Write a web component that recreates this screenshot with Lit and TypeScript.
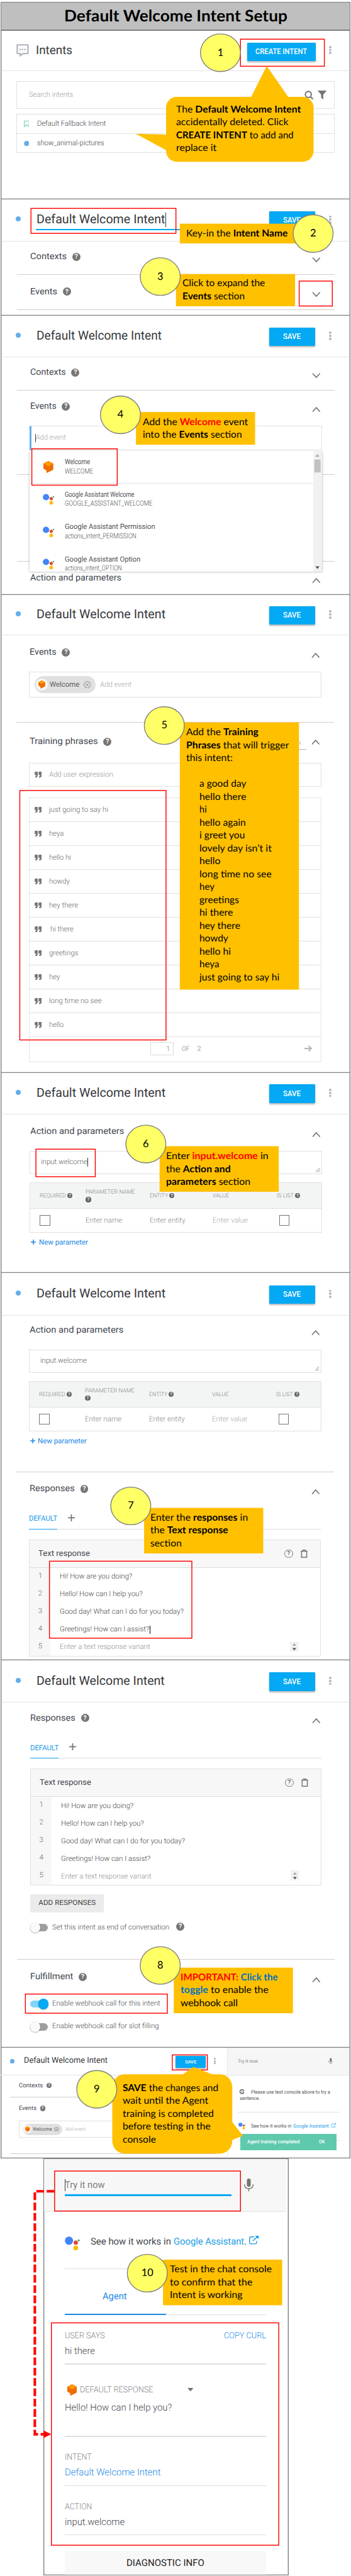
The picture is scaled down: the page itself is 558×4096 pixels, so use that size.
import { LitElement, html, svg, css, nothing } from 'lit';
import { customElement } from 'lit/decorators.js';
import { styleMap } from 'lit/directives/style-map.js';
import { classMap } from 'lit/directives/class-map.js';

type Part = string | [string, string];

/* Text set to an exact measure; the width is applied once the fonts are laid out. */
const t = (text: string, w: number, cls = '') =>
  html`<span class="fit ${cls}" data-w=${w}>${text}</span>`;

const mt = (n: number) => styleMap({ marginTop: n + 'px' });

const help = (cls = '') => html`<span class="help ${cls}">?</span>`;

const chevron = (up: boolean, drop: number) => html`<svg class="chev" style=${mt(drop)} viewBox="0 0 20 12">
  <path d=${up ? 'M1.5 11 10 1.6 18.5 11' : 'M1.5 1 10 10.4 18.5 1'} fill="none" stroke="#757575" stroke-width="2.4"/></svg>`;

const kebab = html`<span class="kebab"><i></i><i></i><i></i></span>`;

const flow = html`<svg class="flowicon" viewBox="0 0 23 28">
  <path d="M11.5 0 23 6v14l-9 5-7 3v-6l-7-4V6z" fill="#ef6c00"/>
  <path d="M11.5 0 22.5 6 11.5 12.5.5 6z" fill="#ff9800"/></svg>`;

const assistant = html`<svg class="asst" viewBox="0 0 35 33">
  <circle cx="9.8" cy="10" r="9.6" fill="#4285f4"/><circle cx="25.5" cy="14.5" r="5" fill="#ea4335"/>
  <circle cx="25.5" cy="27" r="5.6" fill="#fbbc05"/><circle cx="32.4" cy="9.2" r="2.3" fill="#34a853"/></svg>`;

const external = html`<svg class="ext" viewBox="0 0 22 20">
  <path d="M12 2.5H3.500Q1.200 2.500 1.200 4.800V16.500Q1.200 18.800 3.500 18.800H15Q17.300 18.800 17.300 16.500V12M8.500 12 19.500 2" fill="none" stroke="#1a9be8" stroke-width="2"/>
  <path d="M14 0h8v8z" fill="#1a9be8"/></svg>`;

const mic = html`<svg class="mic" viewBox="0 0 22 30">
  <rect x="6.500" y="0" width="9" height="19" rx="4.500" fill="#757575"/>
  <path d="M1 13.500C1 20 5 23.500 11 23.500S21 20 21 13.500M11 23.500V30" fill="none" stroke="#757575" stroke-width="2"/></svg>`;

const quote = html`<svg class="quote" viewBox="0 0 16 14">
  <path d="M1.500 0H7V8.500Q7 14 1 14V11.200Q3.600 11 3.600 8H1.500Q0 8 0 6.500V1.500Q0 0 1.500 0zM10.500 0H16V8.500Q16 14 10 14V11.200Q12.600 11 12.600 8H10.500Q9 8 9 6.500V1.500Q9 0 10.500 0z" fill="#757575"/></svg>`;

const plus = html`<svg class="plus" viewBox="0 0 16 16"><path d="M8 0V16M0 8H16" stroke="#757575" stroke-width="2.600"/></svg>`;

const rule = (m: number) => html`<div class="rule" style=${mt(m)}></div>`;

const bar = (o: { h: number; w: number; editing?: boolean }) => html`
  <header class="bar" style=${styleMap({ height: o.h + 'px' })}>
    <span class="dot"></span>
    <h2 class=${classMap({ title: true, editing: !!o.editing })}>${t('Default Welcome Intent', o.w)}${o.editing ? html`<i class="caret tall"></i>` : nothing}</h2>
    <button class="save">${t('SAVE', 41)}</button>${kebab}
  </header>`;

const head = (label: string, w: number, m: number, o: { up?: boolean; help?: boolean; drop?: number; bare?: boolean } = {}) => html`
  <div class="head" style=${mt(m)}>${t(label, w)}${o.help === false ? nothing : help()}<span class="grow"></span>
    ${o.bare ? nothing : chevron(!!o.up, o.drop ?? 13)}</div>`;

const chip = html`<span class="chip"><span class="coin">${flow}</span>${t('Welcome', 69)}
  <svg class="clear" viewBox="0 0 18 18"><path d="M5.500 5.500 12.500 12.500M12.500 5.500 5.500 12.500" stroke="#757575" stroke-width="1.300"/><circle cx="9" cy="9" r="8" fill="none" stroke="#757575" stroke-width="1.300"/></svg></span>`;

const grip = html`<svg class="grip" viewBox="0 0 10 10"><path d="M0 10 9 0M5 10 10 4.500" stroke="#666" stroke-width="1.200"/></svg>`;

const params = (caret: boolean, drop: number) => html`
  ${head('Action and parameters', 218.5, drop, { up: true, help: false })}
  <div class="field area">${t('input.welcome', 108)}${caret ? html`<i class="caret"></i>` : nothing}${grip}</div>
  <div class="table">
    <div class="tr th">
      <span>${t('REQUIRED', 61)}${help('xs')}</span>
      <span class="two">${t('PARAMETER NAME', 115)}${help('xs')}</span>
      <span>${t('ENTITY', 43)}${help('xs')}</span>
      <span>${t('VALUE', 38.5)}</span>
      <span>${t('IS LIST', 39.5)}${help('xs')}</span>
    </div>
    <div class="tr td">
      <span><i class="check"></i></span><span>${t('Enter name', 85)}</span><span>${t('Enter entity', 83)}</span>
      <span class="pale">${t('Enter value', 82)}</span><span><i class="check last"></i></span>
    </div>
  </div>
  <a class="newparam"><svg class="plusblue" viewBox="0 0 12 12"><path d="M6 0V12M0 6H12" stroke="#1e88e5" stroke-width="2.200"/></svg>${t('New parameter', 114)}</a>`;

const answers: [string, number][] = [
  ['Hi! How are you doing?', 168.6],
  ['Hello! How can I help you?', 192.5],
  ['Good day! What can I do for you today?', 288],
  ['Greetings! How can I assist?', 208],
  ['Enter a text response variant', 210],
];

const responses = (m: number, editing: boolean) => html`
  ${head('Responses', 105, m, { up: true })}
  <div class="tabs"><span class="tab">${t('DEFAULT', 66)}</span>${plus}</div>
  <div class="card">
    <div class="cardhead">${t('Text response', 120)}<span class="grow"></span><span class="ring">?</span>
      <svg class="trash" viewBox="0 0 16 19"><path d="M2 4.500V17.800H14V4.500M0 3.700H16M5.200 3.500V1.100H10.800V3.500" fill="none" stroke="#757575" stroke-width="2.200"/></svg></div>
    ${answers.map(([s, w], i) => html`
      <div class="answer"><span class="num">${i + 1}</span>
        <span class=${classMap({ said: true, hint: i === 4 })}>${t(s, w)}${editing && i === 3 ? html`<i class="caret dark"></i>` : nothing}</span>
        ${i === 4 ? html`<svg class="spin" viewBox="0 0 20 24"><rect width="20" height="24" fill="#f1f1f1"/><path d="M5.500 10 10 4.500 14.500 10z" fill="#a3a3a3"/><path d="M5.500 15.500 10 21 14.500 15.500z" fill="#505050"/></svg>` : nothing}
      </div>`)}
  </div>`;

const toggle = (label: string, w: number, m: number, on = false, q = false) => html`
  <div class="toggle" style=${mt(m)}><span class=${classMap({ track: true, on })}></span>${t(label, w)}${q ? help('far') : nothing}</div>`;

const events: [string, number, string, number][] = [
  ['Welcome', 67, 'WELCOME', 66],
  ['Google Assistant Welcome', 196, 'GOOGLE_ASSISTANT_WELCOME', 204],
  ['Google Assistant Permission', 210, 'actions_intent_PERMISSION', 173],
  ['Google Assistant Option', 176, 'actions_intent_OPTION', 141.5],
];

const phrases: [string, number][] = [
  ['just going to say hi', 137.4], ['heya', 34], ['hello hi', 51], ['howdy', 48], ['hey there', 67.6],
  ['hi there', 54], ['greetings', 68], ['hey', 25.5], ['long time no see', 122], ['hello', 34],
];

/* Notes: left edge, centre of the first line, then the lines with their measures. */
const notes: { x: number; y: number; lines: [Part[], number, number?][] }[] = [
  { x: 409, y: 255, lines: [
    [['The ', ['b', 'Default Welcome Intent']], 290], [['accidentally deleted. Click'], 261],
    [[['b', 'CREATE INTENT'], ' to add and'], 273], [['replace it'], 94]] },
  { x: 433.5, y: 543.5, lines: [[['Key-in the ', ['b', 'Intent Name']], 236]] },
  { x: 424.5, y: 659, lines: [[['Click to expand the'], 192], [[['b', 'Events'], ' section'], 145]] },
  { x: 331.5, y: 981.5, lines: [[['Add the ', ['r', 'Welcome'], ' event'], 244.5], [['into the ', ['b', 'Events'], ' section'], 230.5]] },
  { x: 433.5, y: 1703, lines: [
    [['Add the ', ['b', 'Training']], 168], [[['b', 'Phrases'], ' that will trigger'], 239], [['this intent:'], 108], [[''], 0],
    ...([['a good day', 109], ['hello there', 109], ['hi', 17], ['hello again', 108], ['i greet you', 106],
      ['lovely day isn’t it', 168], ['hello', 49], ['long time no see', 168], ['hey', 35], ['greetings', 92],
      ['hi there', 78], ['hey there', 95], ['howdy', 67], ['hello hi', 73], ['heya', 46],
      ['just going to say hi', 186]] as [string, number][]).map(([s, w]) => [[s], w, 29.5] as [Part[], number, number])] },
  { x: 386, y: 2689, lines: [[['Enter ', ['r', 'input.welcome'], ' in'], 238], [['the ', ['b', 'Action and']], 150], [[['b', 'parameters'], ' section'], 196]] },
  { x: 350, y: 3529, lines: [[['Enter the ', ['b', 'responses'], ' in'], 227], [['the ', ['b', 'Text response']], 181], [['section'], 73]] },
  { x: 420, y: 4598, lines: [[[['r', 'IMPORTANT:'], ' ', ['u', 'Click the']], 226], [[['u', 'toggle'], ' to enable the'], 204.5], [['webhook call'], 133]] },
  { x: 285.5, y: 4855, lines: [[[['b', 'SAVE'], ' the changes and'], 222.5], [['wait until the Agent'], 199],
    [['training is completed'], 212], [['before testing in the'], 204.5], [['console'], 77.5]] },
  { x: 394.5, y: 5277, lines: [[['Test in the chat console'], 237], [['to confirm that the'], 192], [['Intent is working'], 169]] },
];

const noteBoxes = [
  [418, 520, 290, 46], [409, 637, 277, 75], [316, 958, 277, 76], [418, 1679.5, 277, 621.5], [371, 2665, 277, 106],
  [335, 3506, 277, 106], [404, 4575, 277, 106], [379, 5254, 277, 106],
];
const redBoxes = [
  [559, 91, 195, 63], [72, 484.5, 337, 58], [695.5, 653.5, 77, 58], [74, 1043.5, 198.500, 84.500], [46, 1838, 340, 580],
  [83.500, 2672, 138, 64], [115, 3630, 331, 179], [59, 4636.500, 330, 44.500], [400.500, 4778, 81.500, 35],
  [127, 5048, 432, 93], [119.500, 5401, 528.500, 517],
];
const steps = [
  [512.5, 122.5, 123.5], [728, 543, 543.5], [372.500, 643, 644], [280, 964.5, 965], [382, 1687, 1687], [339, 2660, 2661],
  [304, 3501.5, 3502], [372.500, 4570, 4571], [225, 4858, 4859], [342.5, 5285.500, 5286],
];

@customElement('app-root')
export class AppRoot extends LitElement {
  static styles = css`
    :host { display: block; width: 558px; height: 4096px; overflow: hidden; background: #fff; }
    * { box-sizing: border-box; }
    h1, h2 { margin: 0; font: inherit; }
    button { border: 0; padding: 0; font: inherit; color: inherit; }
    .sheet { zoom: 0.68386; position: relative; width: 816px; height: 5989px; padding-top: 4px; overflow: hidden;
      font: 300 17px Roboto, sans-serif; color: #5f6368; text-rendering: geometricPrecision; }
    .fit { display: inline-block; white-space: pre; transform-origin: 0 50%; flex: none; line-height: 1.2; }
    .grow { flex: 1; }
    .banner { height: 66px; margin: 0 1px 0 2px; background: #bfbfbf; outline: 2px solid #7f7f7f; outline-offset: -2px;
      display: flex; align-items: center; justify-content: center; font: 700 37px Lato, sans-serif; color: #000; }
    .panel { display: flex; flex-direction: column; position: relative; margin: 0 1px;
      box-shadow: inset 2px 0 #7f7f7f, inset -2px 0 #7f7f7f, inset 0 -2px #7f7f7f; padding: 0 1px; }
    .p1 { height: 393px; box-shadow: inset 2px 0 #7f7f7f, inset -2px 0 #7f7f7f, inset 0 -2px #7f7f7f, inset 0 1.5px #7f7f7f; }
    .p2 { height: 271px; } .p3 { height: 649px; } .p4 { height: 1111px; }
    .p5 { height: 466px; } .p6 { height: 901px; } .p7 { height: 900px; }
    .p6 .body, .p4 .body { margin-left: -1.500px; margin-right: 1.500px; }
    .body { display: flex; flex-direction: column; }

    .bar { display: flex; align-items: center; flex: none; margin: 0 1px; padding: 0 43px 0 33px; border-bottom: 1.500px solid #e3e4e5; }
    .dot { width: 12px; height: 12px; border-radius: 50%; background: #64aee9; margin-top: -4px; }
    .title { flex: 1; margin-left: 37px; font-size: 29px; font-weight: 400; color: #37393c; position: relative; line-height: 36px; }
    .editing::after { content: ''; position: absolute; left: -1px; top: 39px; width: 500px; height: 3px; background: #03a9f4; }
    .caret { display: inline-block; width: 1.500px; height: 20px; background: #333; vertical-align: middle; }
    .caret.tall { height: 34px; vertical-align: -8px; }
    .save { width: 106px; height: 43px; margin: 3px 32px 0 0; border-radius: 2px; background: #03a9f4; color: #fff; flex: none;
      font-size: 17.500px; font-weight: 500; box-shadow: 0 2px 4px rgba(0,0,0,.3); display: grid; place-items: center; }
    .kebab { display: flex; flex-direction: column; gap: 1.500px; width: 6px; margin-top: -1px; }
    .kebab i { width: 6px; height: 5.500px; border-radius: 50%; background: #b4b8c2; }
    .p1bar { padding-left: 35.500px; height: 95px; }
    .p1bar .title { margin-left: 16px; font-size: 28px; }
    .p1bar .save { width: 160px; margin-top: 7px; margin-right: 30px; }
    .chat { width: 29px; height: 29px; }

    .search, .list { margin: 24px 36.500px 0; border: 1.500px solid #e0e0e0; }
    .search { height: 64px; display: flex; align-items: center; padding: 0 16px 0 28px; gap: 11px; color: #9b9ea3; }
    .search svg { width: 21px; height: 21px; }
    .list { margin-top: 12px; }
    .item { height: 44px; display: flex; align-items: center; padding-left: 15px; gap: 18px; color: #43474f; }
    .item + .item { border-top: 1.500px solid #e0e0e0; }
    .item svg { width: 13px; height: 15px; }

    .head { display: flex; align-items: center; flex: none; height: 40px; padding: 0 69px 0 68px; font-size: 20.500px; font-weight: 400; color: #43474f; }
    .help { display: grid; place-items: center; flex: none; width: 19px; height: 19px; margin-left: 13px; border-radius: 50%;
      background: #757575; color: #fff; font: 700 15px/1 Roboto, sans-serif; }
    .help.xs { width: 12px; height: 12px; font-size: 9.500px; margin-left: 3px; background: #666; }
    .help.far { margin: -4px 0 0 16px; }
    .chev { width: 20px; height: 12px; flex: none; }
    .rule { height: 1.500px; flex: none; margin: 0 36px 0 37px; background: #d3cdcf; }

    .field { display: flex; align-items: center; flex: none; position: relative; margin: 24px 66px 0 67px; border: 1.500px solid #e0e0e0; }
    .blank { height: 58px; border-left: 5px solid #64aee9; padding-left: 8px; color: #a6a9ad; }
    .chips { height: 60px; margin-top: 25px; padding-left: 12px; color: #a6a9ad; }
    .chip { display: flex; align-items: center; height: 39px; padding: 0 11px 0 3px; margin-right: 10px; border-radius: 20px; background: #e0e0e0; color: #5c5c5c; font-weight: 400; gap: 5px; width: 141px; }
    .coin { width: 27px; height: 27px; border-radius: 50%; background: #f7f7f7; display: grid; place-items: center; }
    .coin .flowicon { width: 16px; height: 19px; }
    .clear { width: 17px; height: 17px; margin-left: 4px; }
    .area { height: 54.500px; padding-left: 25px; margin-top: 24.500px; }
    .grip { position: absolute; right: 3px; bottom: 3px; width: 10px; height: 10px; }

    .menu { position: absolute; left: 68px; top: 315px; width: 679px; height: 281px; background: #fff; display: flex; overflow: hidden; }
    .menushade { position: absolute; left: 68px; top: 316px; width: 679px; height: 280px; box-shadow: 0 2px 5px rgba(0,0,0,.35); }
    .options { flex: 1; }
    .option { height: 75px; display: flex; align-items: center; color: #4c4f54; }
    .option:first-child { border-bottom: 1.500px solid #e0e0e0; }
    .option .pic { width: 82px; padding-left: 30px; display: flex; }
    .option .pair { display: grid; grid-auto-rows: 21px; align-items: center; }
    .pair .fit:first-child { font-weight: 400; }
    .option .flowicon { width: 23px; height: 28px; margin-left: 2px; }
    .option .asst { width: 27px; height: 26px; }
    .scroll { width: 19.500px; background: #f1f1f1; }

    .quote { width: 16.500px; height: 14px; margin-right: 17px; flex: none; }
    .add { height: 56px; margin-top: 29px; padding-left: 11px; color: #94979b; }
    .said-list { margin: 25px 66px 0 67px; border: 1.500px solid #e3e4e5; }
    .phrase { height: 55.600px; display: flex; align-items: center; padding-left: 11px; border-bottom: 1.500px solid #e0e0e0; color: #6a6a6a; }
    .phrase .in { margin-left: 4px; }
    .pager { height: 56.500px; display: flex; align-items: center; padding: 0 20px 3px 280px; color: #a0a5ab; font-size: 16px; font-weight: 400; }
    .page { width: 55px; height: 30px; border: 1.500px solid #dcdcdc; text-align: right; padding: 5px 7px 0 0; line-height: 18px; margin-right: 19px; }
    .pager .of { margin-right: 18px; }
    .pager svg { width: 18px; height: 15px; }

    .table { margin: 19.500px 66px 0 67px; height: 117px; flex: none; border: 1.500px solid #e0e0e0; }
    .tr { display: grid; grid-template-columns: 107px 148px 147px 149px 1fr; align-items: center; padding-left: 22px; }
    .tr > span { display: flex; align-items: center; }
    .th { height: 60px; background: #f3f5f5; border-bottom: 1.500px solid #e0e0e0; color: #7e8186; font-size: 13.500px; }
    .tr > .two { flex-direction: column; align-items: flex-start; gap: 3px; margin-top: -1px; }
    .two .help.xs { margin-left: 0; }
    .td { height: 54px; color: #85888c; }
    .pale { color: #a9acb1; }
    .check { width: 24px; height: 24px; border: 1.500px solid #757575; } .check.last { margin-left: 6px; }
    .newparam { display: flex; align-items: center; flex: none; height: 24px; margin: 11px 0 0 69px; gap: 7px; color: #1e88e5; font-weight: 400; }
    .plusblue { width: 12px; height: 12px; margin-top: -3px; }

    .tabs { display: flex; flex: none; height: 48px; margin: 26px 67px 0 67px; border-bottom: 1.500px solid #dcdcdc; }
    .tab { height: 48px; padding-top: 12px; border-bottom: 2px solid #1a9be8; color: #1a9be8; font-weight: 400; }
    .plus { width: 16px; height: 16px; margin: 13px 0 0 25px; }
    .card { margin: 24px 67px 0 67px; flex: none; border: 1.500px solid #e0e0e0; }
    .cardhead { height: 64px; display: flex; align-items: center; padding: 0 29px 0 20px; background: #f7f7f7; border-bottom: 1.500px solid #dcdcdc; font-size: 18.500px; font-weight: 400; color: #43474f; }
    .ring { width: 20px; height: 20px; border: 2px solid #757575; border-radius: 50%; display: grid; place-items: center; font: 700 14px/1 Roboto, sans-serif; color: #757575; margin-right: 18px; }
    .trash { width: 16px; height: 19px; }
    .answer { display: flex; height: 41px; align-items: center; color: #45484c; position: relative; }
    .num { width: 48px; height: 41px; padding: 7px 0 0 20px; background: #f7f7f7; color: #6b6e73; }
    .said { padding-left: 22.500px; } .hint { color: #8f9296; }
    .caret.dark { background: #000; }
    .spin { position: absolute; right: 50px; top: 7px; width: 20px; height: 24px; }
    .p7 .body .tabs { margin-left: 68px; } .p7 .card { margin-left: 68px; margin-top: 23.500px; }
    .addresp { width: 171px; height: 43px; flex: none; margin: 20px 0 0 68px; background: #ebebeb; border-radius: 2px; color: #3d4045; font-weight: 400; padding-bottom: 2px; }
    .toggle { display: flex; flex: none; align-items: center; height: 30px; padding-left: 68px; color: #4d5056; }
    .track { width: 41px; height: 17px; margin-right: 11px; border-radius: 9px; background: #9e9e9e; position: relative; margin-top: 2px; }
    .track::before { content: ''; position: absolute; left: 0; top: -3.500px; width: 24px; height: 24px; border-radius: 50%; background: #fafafa; box-shadow: 0 1px 3px rgba(0,0,0,.4); }
    .track.on { background: #81d4fa; } .track.on::before { left: 19px; background: #03a9f4; }

    .p8 { height: 257px; margin: 0 2px 0 1px; flex-direction: row; }
    .left { width: 527px; border-right: 1.500px solid #e8e8e8; height: 254px; }
    .right { flex: 1; height: 254px; position: relative; font-size: 11.500px; font-weight: 400; color: #4f5359; }
    .left .bar { margin: 0; padding: 0 26px 0 22px; }
    .left .dot { width: 9px; height: 9px; margin-top: 0; }
    .left .title { margin-left: 22px; font-size: 19px; }
    .left .save { width: 70px; height: 28px; margin: 4px 20px 0 0; font-size: 11.500px; }
    .left .kebab i { width: 4px; height: 4px; } .left .kebab { gap: 1px; width: 4px; }
    .left .head { font-size: 14px; padding-left: 42px; }
    .left .help { width: 12px; height: 12px; font-size: 9.500px; margin-left: 8px; }
    .left .rule { margin-left: 22px; margin-right: 24px; }
    .left .chips { height: 39px; margin: 9px 20px 0 42px; padding-left: 8px; font-size: 11.500px; }
    .left .chip { width: 91px; height: 26px; padding: 0 7px 0 2px; gap: 3px; margin-right: 7px; }
    .left .coin { width: 18px; height: 18px; } .left .coin .flowicon { width: 11px; height: 13px; }
    .left .clear { width: 11px; height: 11px; margin-left: 2px; }
    .try { height: 65px; background: #f6f6f6; border-bottom: 1.500px solid #e3e4e5; display: flex; align-items: center; padding: 0 38px 0 24px; color: #85888c; margin-right: 1px; }
    .try .mic { width: 11px; height: 16px; }
    .info { margin: 30px 0 0 28px; line-height: 16px; height: 32px; }
    .info div { display: flex; height: 16px; align-items: center; }
    .info svg { width: 11px; height: 11px; margin-right: 16px; }
    .right .rule { margin-left: 24px; margin-right: 23px; background: #e0e0e0; }
    .see { display: flex; align-items: center; height: 20px; margin: 21px 0 0 25px; flex: none; }
    .see .asst { width: 17px; height: 16px; margin-right: 13px; }
    .see .link { color: #1a9be8; margin-left: 3px; }
    .see .ext { width: 11px; height: 10px; margin: -3px 0 0 4px; }
    .toast { position: absolute; left: 30px; top: 200px; width: 224px; height: 39px; background: #5fc9ae; color: #fff; font-weight: 500; display: flex; align-items: center; padding: 0 28px 0 15px; justify-content: space-between; }

    .p9 { height: 970px; width: 570px; margin: 0 0 0 101px; padding: 2px; box-shadow: inset 0 0 0 2px #7f7f7f; font-size: 22px; font-weight: 300; color: #43474f; }
    .console { height: 123px; background: #f7f7f7; border-bottom: 1.500px solid #e3e4e5; display: flex; align-items: center; padding: 0 77px 0 47px; flex: none; margin-right: 3px; }
    .entry { position: relative; width: 389px; height: 28px; color: #7b7e83; font-weight: 400; display: flex; align-items: center; }
    .entry::after { content: ''; position: absolute; left: 0; right: 0; top: 35px; height: 4px; background: #03a9f4; }
    .entry .caret { height: 28px; margin-right: -1px; }
    .console .mic { width: 22px; height: 30px; margin-left: 29px; }
    .p9 .see { height: 40px; margin: 49px 0 0 48px; font-weight: 400; }
    .p9 .see .asst { width: 35px; height: 33px; margin: 8px 25px 0 0; }
    .p9 .see .link { margin-left: 6px; } .p9 .see .ext { width: 22px; height: 20px; margin-left: 6px; margin-top: -6px; }
    .p9 .rule { margin-left: 47px; margin-right: 51px; background: #dfdfdf; height: 2px; }
    .agent { height: 63px; margin: 44px 51px 0 47px; border-bottom: 2px solid #dfdfdf; flex: none; }
    .agent div { width: 236px; height: 63px; border-bottom: 3px solid #1a8be0; padding: 6px 0 0 89px; color: #1e88e5; font-weight: 400; }
    .line { display: flex; align-items: center; height: 30px; flex: none; padding: 0 51px 0 48px; }
    .cap { font-size: 20px; color: #84888e; }
    .blue { color: #1e88e5; }
    .cap .flowicon { width: 22px; height: 27px; margin: 0 8px 0 5px; }
    .drop { margin-left: 79px; }
    .diag { height: 55px; flex: none; margin: 37px 51px 0 47px; background: #f8f8f8; color: #222; font-weight: 400; display: grid; place-items: center; }

    .overlay { position: absolute; left: 0; top: 0; width: 816px; height: 5989px; }
    .note { position: absolute; font: 400 22.200px/30px Lato, sans-serif; color: #000; }
    .note div { height: 30px; } .note .fit { line-height: 30px; }
    .note b { font-weight: 700; } .note .r { color: #f00; } .note .u { color: #0070c0; }
    .step { position: absolute; width: 60px; height: 30px; text-align: center; font: 400 24px/30px Lato, sans-serif; color: #000; }
  `;

  firstUpdated() {
    const sheet = this.renderRoot.querySelector('.sheet') as HTMLElement;
    const unit = sheet.getBoundingClientRect().width / 816;
    const spans = [...this.renderRoot.querySelectorAll<HTMLElement>('.fit')];
    const natural = spans.map((s) => s.getBoundingClientRect().width / unit);
    spans.forEach((s, i) => {
      const w = Number(s.dataset.w);
      if (!w || !natural[i]) return;
      s.style.width = w + 'px';
      s.style.transform = `scaleX(${w / natural[i]})`;
    });
  }

  render() {
    return html`<main class="sheet">
      <h1 class="banner">${t('Default Welcome Intent Setup', 519)}</h1>

      <section class="panel p1">
        <header class="bar p1bar">
          <svg class="chat" viewBox="0 0 29 29"><path d="M2 2H27V22H15.500L9 27.500V22H2z" fill="none" stroke="#b4b8c2" stroke-width="3.400" stroke-linejoin="round"/><path d="M7 11h3.500v3.500H7zM12.700 11h3.500v3.500h-3.500zM18.400 11h3.500v3.500h-3.500z" fill="#b4b8c2"/></svg>
          <h2 class="title">${t('Intents', 85)}</h2>
          <button class="save">${t('CREATE INTENT', 120)}</button>${kebab}
        </header>
        <div class="search">${t('Search intents', 102.5)}<span class="grow"></span>
          <svg viewBox="0 0 21 21"><circle cx="9" cy="9" r="7" fill="none" stroke="#757575" stroke-width="3"/><path d="M13.500 14 20 20.500" stroke="#757575" stroke-width="3.200"/></svg>
          <svg viewBox="0 0 21 21"><path d="M0 0H21L13 9.500V21L8 16.500V9.500z" fill="#757575"/></svg>
        </div>
        <div class="list">
          <div class="item"><svg viewBox="0 0 13 15"><path d="M1 .8H12V13.800L6.500 9.500 1 13.800z" fill="none" stroke="#6ccba6" stroke-width="1.500"/></svg>${t('Default Fallback Intent', 160)}</div>
          <div class="item"><svg viewBox="0 0 13 15"><circle cx="6.500" cy="7.500" r="6" fill="#64aee9"/></svg>${t('show_animal-pictures', 156)}</div>
        </div>
      </section>

      <section class="panel p2">
        ${bar({ h: 98, w: 299, editing: true })}
        ${head('Contexts', 85, 16)}${rule(21)}
        ${head('Events', 63, 19)}${rule(21)}
      </section>

      <section class="panel p3">
        ${bar({ h: 96, w: 291 })}
        ${head('Contexts', 83, 16)}${rule(20)}
        ${head('Events', 61, 18, { up: true })}
        <div class="field blank"><i class="caret"></i>${t('Add event', 70)}</div>
        ${rule(55)}${rule(200)}
        ${head('Action and parameters', 212, 19, { up: true, help: false, drop: 12 })}
        <div class="menushade"></div>
        <div class="menu">
          <div class="options">${events.map(([a, aw, b, bw], i) => html`
            <div class="option"><span class="pic">${i ? assistant : flow}</span><span class="pair">${t(a, aw)}${t(b, bw)}</span></div>`)}
          </div>
          <svg class="scroll" viewBox="0 0 19.500 281"><path d="M5 13.500 9.700 7.500 14.400 13.500z" fill="#a3a3a3"/><rect x="2.500" y="20" width="14.500" height="30" fill="#c1c1c1"/><path d="M5 268.500 9.700 274.500 14.400 268.500z" fill="#505050"/></svg>
        </div>
      </section>

      <section class="panel p4">
        ${bar({ h: 94, w: 300 })}
        <div class="body">
          ${head('Events', 62.5, 20, { up: true })}
          <div class="field chips">${chip}${t('Add event', 73)}</div>
          ${rule(57)}
          ${head('Training phrases', 159, 24, { up: true, drop: 4 })}
          <div class="field add">${quote}${t('Add user expression', 149)}</div>
          <div class="said-list">
            ${phrases.map(([s, w], i) => html`<div class="phrase">${quote}${t(s, w, i === 5 ? 'in' : '')}</div>`)}
            <div class="pager"><span class="page">1</span><span class="of">${t('OF', 17.5)}</span>2<span class="grow"></span>
              <svg viewBox="0 0 18 15"><path d="M0 7.500H16M9.500 1 16 7.500 9.500 14" fill="none" stroke="#b4b8c2" stroke-width="3"/></svg></div>
          </div>
        </div>
      </section>

      <section class="panel p5">${bar({ h: 97, w: 300 })}${params(true, 20)}</section>

      <section class="panel p6">
        ${bar({ h: 99, w: 300 })}
        <div class="body">${params(false, 14)}${rule(58)}${responses(19, true)}</div>
      </section>

      <section class="panel p7">
        ${bar({ h: 97.5, w: 298 })}
        <div class="body">${responses(16.5, false)}
          <button class="addresp">${t('ADD RESPONSES', 133)}</button>
          ${toggle('Set this intent as end of conversation', 272, 19, false, true)}
          ${rule(59.5)}
          ${head('Fulfillment', 100, 19.5, { up: true })}
          ${toggle('Enable webhook call for this intent', 251, 27, true)}
          ${toggle('Enable webhook call for slot filling', 248, 23)}
        </div>
      </section>

      <section class="panel p8">
        <div class="left body">
          <header class="bar" style=${styleMap({ height: '65px' })}><span class="dot"></span>
            <h2 class="title">${t('Default Welcome Intent', 194.5)}</h2><button class="save">${t('SAVE', 26.5)}</button>${kebab}</header>
          ${head('Contexts', 56, 3.5, { bare: true })}${rule(6.5)}
          ${head('Events', 41, 5, { bare: true })}
          <div class="field chips"><span class="chip"><span class="coin">${flow}</span>${t('Welcome', 45)}
            <svg class="clear" viewBox="0 0 18 18"><path d="M5.500 5.500 12.500 12.500M12.500 5.500 5.500 12.500" stroke="#757575" stroke-width="1.800"/><circle cx="9" cy="9" r="8" fill="none" stroke="#757575" stroke-width="1.800"/></svg></span>${t('Add event', 47)}</div>
          ${rule(36)}
        </div>
        <div class="right body">
          <div class="try">${t('Try it now', 47)}<span class="grow"></span>${mic}</div>
          <div class="info">
            <div><svg viewBox="0 0 11 11"><circle cx="5.500" cy="5.500" r="4.700" fill="none" stroke="#333" stroke-width="1.500"/><path d="M5.500 2.500V4M5.500 4.800V8.500" stroke="#333" stroke-width="1.400"/></svg>${t('Please use test console above to try a', 184)}</div>
            <div>${t('sentence.', 47)}</div>
          </div>
          ${rule(23)}
          <div class="see">${assistant}${t('See how it works in', 94)}<span class="link">${t('Google Assistant.', 85.5)}</span>${external}</div>
          ${rule(23)}
          <div class="toast">${t('Agent training completed', 122)}${t('OK', 14)}</div>
        </div>
      </section>

      <section class="panel p9">
        <div class="console"><div class="entry"><i class="caret"></i>${t('Try it now', 93)}</div>${mic}</div>
        <div class="see">${assistant}${t('See how it works in', 187)}<span class="link">${t('Google Assistant', 164)}</span>.${external}</div>
        ${rule(42)}
        <div class="agent"><div>${t('Agent', 56.5)}</div></div>
        <div class="line cap" style=${mt(33)}>${t('USER SAYS', 93)}<span class="grow"></span><span class="blue">${t('COPY CURL', 98)}</span></div>
        <div class="line" style=${mt(5)}>${t('hi there', 70)}</div>
        ${rule(15)}
        <div class="line cap" style=${mt(44)}>${flow}${t('DEFAULT RESPONSE', 170.5)}
          <svg width="14" height="8" viewBox="0 0 14 8" class="drop"><path d="M0 0H14L7 8z" fill="#757575"/></svg></div>
        <div class="line" style=${mt(11)}>${t('Hello! How can I help you?', 249)}</div>
        ${rule(51)}
        <div class="line cap" style=${mt(33)}>${t('INTENT', 62.5)}</div>
        <div class="line blue" style=${mt(5)}>${t('Default Welcome Intent', 223)}</div>
        ${rule(15)}
        <div class="line cap" style=${mt(33)}>${t('ACTION', 63.5)}</div>
        <div class="line" style=${mt(5)}>${t('input.welcome', 139)}</div>
        ${rule(14)}
        <div class="diag">${t('DIAGNOSTIC INFO', 181)}</div>
      </section>

      <svg class="overlay" viewBox="0 0 816 5989">
        <path d="M696 1724 699 1731M690 1742.500H712" stroke="#aaa" stroke-width="1.500"/>
        ${redBoxes.map(([x, y, w, h]) => svg`<rect x=${x} y=${y} width=${w} height=${h} fill="none" stroke="#f00" stroke-width="2.100"/>`)}
        <g fill="#ffc000">
          <path d="M411 225H584L620 153 670 225H704A25 25 0 0 1 729 250V351A25 25 0 0 1 704 376H411A25 25 0 0 1 386 351V349L316 311 386 313V250A25 25 0 0 1 411 225z"/>
          <path d="M291 4823H425L450 4806 493 4823H511A29 30 0 0 1 540 4853V4934L564.600 4966 540 4976V4977.500A29 30 0 0 1 511 5007.500H291A29 30 0 0 1 261 4977.500V4853A29 30 0 0 1 291 4823z"/>
          ${noteBoxes.map(([x, y, w, h]) => svg`<rect x=${x} y=${y} width=${w} height=${h}/>`)}
        </g>
        ${steps.map(([x, y]) => svg`<ellipse cx=${x} cy=${y} rx="46.500" ry="43.700" fill="#ff6" stroke="#7f7f7f" stroke-width="2"/>`)}
        <path d="M126.500 5095H81V5660H104" fill="none" stroke="#f00" stroke-width="6" stroke-dasharray="18 6"/>
        <path d="M101 5651 119 5660 101 5669z" fill="#f00"/>
      </svg>
      ${steps.map(([x, , y], i) => html`<span class="step" style=${styleMap({ left: x - 30 + 'px', top: y - 15.5 + 'px' })}>${i + 1}</span>`)}
      ${notes.map((n) => html`<div class="note" style=${styleMap({ left: n.x + 'px', top: n.y - 15.5 + 'px' })}>
        ${n.lines.map(([parts, w, indent]) => html`<div style=${styleMap({ paddingLeft: (indent ?? 0) + 'px' })}><span class="fit" data-w=${w}>${parts.map((p) =>
          typeof p === 'string' ? p : html`<b class=${p[0]}>${p[1]}</b>`)}</span></div>`)}
      </div>`)}
    </main>`;
  }
}
